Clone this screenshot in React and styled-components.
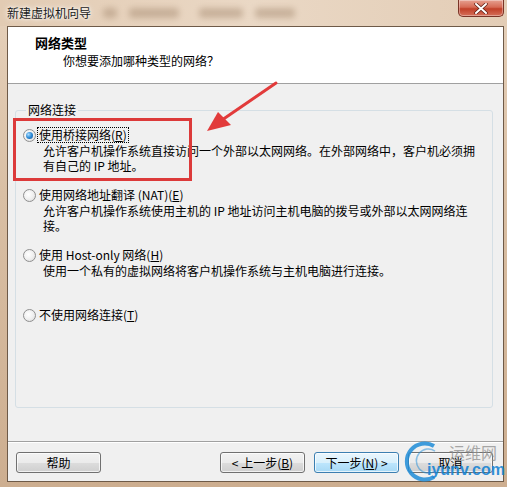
import React from "react";
import styled, { createGlobalStyle } from "styled-components";

const Global = createGlobalStyle`
  body {
    margin: 0;
    font-family: "Noto Sans CJK SC", "Liberation Sans", sans-serif;
    font-size: 12px;
    color: #000;
  }
`;

const Frame = styled.div`
  position: relative;
  width: 507px;
  height: 487px;
  overflow: hidden;
  display: flex;
  flex-direction: column;
  background: linear-gradient(180deg, #e6d1bb 0%, #d9bfa4 40%, #cdae90 100%);
`;

const TitleBar = styled.div`
  height: 26px;
  display: flex;
  align-items: flex-start;
  padding-left: 7px;
  background: linear-gradient(90deg, #e2cbb3 0%, #ead8c5 50%, #e3cdb6 100%);
`;

const Title = styled.div`
  margin-top: 5px;
  line-height: 16px;
  color: #1a1a1a;
  text-shadow: 0 0 6px #fff, 0 0 3px #fff;
`;

const Blur = styled.span`
  margin-top: 8px;
  margin-left: ${(p) => p.$gap}px;
  width: ${(p) => p.$w}px;
  height: 10px;
  background: #a0846a;
  opacity: 0.45;
  filter: blur(3px);
  border-radius: 4px;
`;

const Close = styled.div`
  margin-left: auto;
  margin-right: 3px;
  width: 46px;
  height: 17px;
  box-sizing: border-box;
  border: 1px solid #7a3426;
  border-top: none;
  border-radius: 0 0 5px 5px;
  background: linear-gradient(180deg, #e6a090 0%, #d66a55 45%, #c13f28 55%, #d5705a 100%);
  box-shadow: inset 0 0 0 1px rgba(255, 255, 255, 0.35);
  display: flex;
  align-items: center;
  justify-content: center;
`;

const Client = styled.div`
  flex: 1;
  margin: 0 3px 5px 7px;
  border: 1px solid #6e5a48;
  display: flex;
  flex-direction: column;
  background: #f0f0f0;
`;

const Header = styled.div`
  height: 56px;
  background: #fff;
  border-bottom: 1px solid #a0a0a0;
  box-sizing: content-box;
  padding: 0 0 0 27px;
`;

const HeaderTitle = styled.div`
  margin-top: 8px;
  font-weight: bold;
  font-size: 13px;
  line-height: 16px;
`;

const HeaderSub = styled.div`
  margin-top: 2px;
  margin-left: 28px;
  line-height: 16px;
`;

const Body = styled.div`
  flex: 1;
  padding: 18px 10px 0 7px;
`;

const Group = styled.fieldset`
  margin: 0;
  height: 306px;
  box-sizing: border-box;
  border: 1px solid #d5dfe5;
  border-radius: 3px;
  padding: 9px 8px 0 7px;
`;

const Legend = styled.legend`
  padding: 0 2px;
  margin-left: 3px;
  line-height: 16px;
`;

const Option = styled.div`
  height: 60px;
`;

const OptionRow = styled.div`
  display: flex;
  align-items: center;
  height: 16px;
`;

const Radio = styled.span`
  width: 13px;
  height: 13px;
  box-sizing: border-box;
  border-radius: 50%;
  border: 1px solid #8f8f8f;
  background: radial-gradient(circle at 40% 40%, #ffffff 0%, #f0f0f0 50%, #d6d6d6 100%);
  margin-right: 1px;
  display: flex;
  align-items: center;
  justify-content: center;
  &::after {
    content: "";
    display: ${(p) => (p.$on ? "block" : "none")};
    width: 7px;
    height: 7px;
    border-radius: 50%;
    background: radial-gradient(circle at 35% 35%, #a9dcff 0%, #2e8bd6 50%, #0b4f9a 100%);
  }
`;

const Label = styled.span`
  line-height: 14px;
  padding: 0 1px;
  border: 1px dotted ${(p) => (p.$focus ? "#000" : "transparent")};
`;

const Desc = styled.div`
  margin-left: 20px;
  line-height: 15px;
`;

const Footer = styled.div`
  border-top: 1px solid #a0a0a0;
  box-shadow: inset 0 1px 0 #fff;
  height: 40px;
  box-sizing: border-box;
  display: flex;
  align-items: flex-start;
  padding: 10px 7px 0 8px;
  gap: 9px;
`;

const Button = styled.button`
  width: 85px;
  height: 21px;
  padding: 0;
  font-family: inherit;
  font-size: 12px;
  line-height: 17px;
  color: #000;
  border-radius: 3px;
  border: 1px solid ${(p) => (p.$def ? "#3c7fb1" : "#707070")};
  background: ${(p) =>
    p.$def
      ? "linear-gradient(180deg, #eaf6fd 0%, #d9f0fc 50%, #bee6fd 50%, #a7d9f5 100%)"
      : "linear-gradient(180deg, #f2f2f2 0%, #ebebeb 50%, #dddddd 50%, #cfcfcf 100%)"};
  box-shadow: inset 0 0 0 1px rgba(255, 255, 255, 0.7);
  margin-left: ${(p) => p.$push || 0}px;
`;

const U = styled.u`
  text-decoration: underline;
`;

const RedBox = styled.div`
  position: absolute;
  left: 13px;
  top: 118px;
  width: 179px;
  height: 63px;
  box-sizing: border-box;
  border: 3px solid #dc3a3a;
`;

const Arrow = styled.svg`
  position: absolute;
  left: 200px;
  top: 80px;
`;

const Watermark = styled.div`
  position: absolute;
  left: 403px;
  top: 440px;
  width: 102px;
  height: 42px;
  pointer-events: none;
  display: flex;
  align-items: center;
`;

const MarkText = styled.div`
  display: flex;
  flex-direction: column;
  align-items: flex-end;
  margin-left: -16px;
`;

const MarkCn = styled.span`
  font-size: 16px;
  line-height: 17px;
  color: rgba(140, 140, 140, 0.75);
  margin-right: 8px;
`;

const MarkEn = styled.span`
  font-family: "Liberation Sans", sans-serif;
  font-weight: bold;
  font-size: 16px;
  line-height: 17px;
  color: rgba(20, 130, 210, 0.9);
`;

const options = [
  {
    label: ["使用桥接网络(", "R", ")"],
    desc: ["允许客户机操作系统直接访问一个外部以太网网络。在外部网络中，客户机必须拥", "有自己的 IP 地址。"],
    on: true,
  },
  {
    label: ["使用网络地址翻译 (NAT)(", "E", ")"],
    desc: ["允许客户机操作系统使用主机的 IP 地址访问主机电脑的拨号或外部以太网网络连", "接。"],
  },
  {
    label: ["使用 Host-only 网络(", "H", ")"],
    desc: ["使用一个私有的虚拟网络将客户机操作系统与主机电脑进行连接。"],
  },
  {
    label: ["不使用网络连接(", "T", ")"],
    desc: [],
  },
];

export default function App() {
  return (
    <Frame>
      <Global />
      <TitleBar>
        <Title>新建虚拟机向导</Title>
        <Blur $gap={12} $w={14} />
        <Blur $gap={12} $w={50} />
        <Blur $gap={20} $w={44} />
        <Blur $gap={12} $w={40} />
        <Close>
          <svg width="14" height="11" viewBox="0 0 14 11">
            <path d="M2 1 L12 10 M12 1 L2 10" stroke="#5a1a10" strokeWidth="3.4" strokeLinecap="round" />
            <path d="M2 1 L12 10 M12 1 L2 10" stroke="#fff" strokeWidth="2" strokeLinecap="round" />
          </svg>
        </Close>
      </TitleBar>
      <Client>
        <Header>
          <HeaderTitle>网络类型</HeaderTitle>
          <HeaderSub>你想要添加哪种类型的网络？</HeaderSub>
        </Header>
        <Body>
          <Group>
            <Legend>网络连接</Legend>
            {options.map((o, i) => (
              <Option key={i}>
                <OptionRow>
                  <Radio $on={o.on} />
                  <Label $focus={o.on}>
                    {o.label[0]}
                    <U>{o.label[1]}</U>
                    {o.label[2]}
                  </Label>
                </OptionRow>
                <Desc>
                  {o.desc.map((d, j) => (
                    <div key={j}>{d}</div>
                  ))}
                </Desc>
              </Option>
            ))}
          </Group>
        </Body>
        <Footer>
          <Button>帮助</Button>
          <Button $push={110}>
            &lt; 上一步(<U>B</U>)
          </Button>
          <Button $def>
            下一步(<U>N</U>) &gt;
          </Button>
          <Button>取消</Button>
        </Footer>
      </Client>

      <RedBox />
      <Arrow width="80" height="56" viewBox="0 0 80 56">
        <path d="M76 3 L22 40" stroke="#e23b3b" strokeWidth="3" strokeLinecap="round" />
        <path d="M7 51 L18 32 L31 45 Z" fill="#e23b3b" />
      </Arrow>

      <Watermark>
        <svg width="40" height="42" viewBox="0 0 40 42">
          <path d="M31 6 A18 18 0 1 0 31 37" fill="none" stroke="rgba(30,140,215,0.85)" strokeWidth="4" />
          <path d="M32 11 A12 12 0 1 0 32 31" fill="none" stroke="rgba(30,140,215,0.5)" strokeWidth="1.5" />
        </svg>
        <MarkText>
          <MarkCn>运维网</MarkCn>
          <MarkEn>iyunv.com</MarkEn>
        </MarkText>
      </Watermark>
    </Frame>
  );
}
